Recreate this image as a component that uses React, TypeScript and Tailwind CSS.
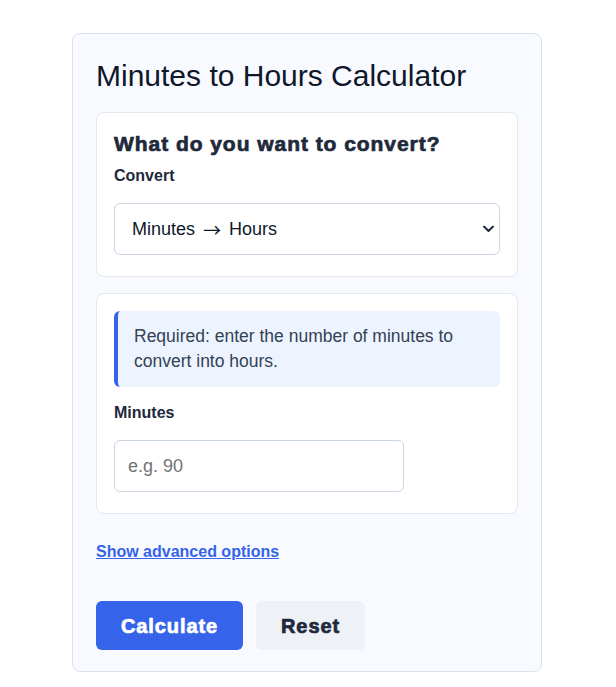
import { useState } from "react";

const options = [
  { value: "m2h", from: "Minutes", to: "Hours" },
  { value: "h2m", from: "Hours", to: "Minutes" },
];

export default function App() {
  const [mode, setMode] = useState("m2h");
  const [open, setOpen] = useState(false);
  const [minutes, setMinutes] = useState("");
  const current = options.find((o) => o.value === mode)!;

  return (
    <div className="min-h-screen bg-white pt-[33px] font-['Liberation_Sans',Arial,sans-serif] text-[#0f172a]">
      <div className="ml-[72px] w-[470px] rounded-lg border border-[#dbe2ec] bg-[#f8faff] px-[23px] pt-[24px] pb-[21px]">
        <h1 className="text-[30px] leading-[36px] font-normal text-[#0f172a]">Minutes to Hours Calculator</h1>

        {/* conversion direction */}
        <section className="mt-[18px] rounded-lg border border-[#e2e8f0] bg-white px-[17px] pt-[17px] pb-[21px]">
          <h2 className="text-[21px] leading-[28px] font-black tracking-[0.95px] text-[#1e293b] [-webkit-text-stroke:0.7px_#1e293b]">
            What do you want to convert?
          </h2>
          <label className="mt-[6px] mb-[15px] block text-[16px] leading-[24px] font-bold text-[#1e293b]">Convert</label>
          <div className="relative">
            <button
              type="button"
              onClick={() => setOpen(!open)}
              className="flex h-[52px] w-full items-center rounded-md border border-[#cbd5e1] bg-white pl-[17px] text-left text-[18px] text-[#0f172a]"
            >
              {current.from}
              <span className="mx-[8px] font-['Noto_Sans_CJK_JP',sans-serif]">→</span>
              {current.to}
            </button>
            <svg
              className="pointer-events-none absolute right-[6px] top-1/2 -translate-y-1/2"
              width="11"
              height="7"
              viewBox="0 0 11 7"
              fill="none"
            >
              <path d="M1 1l4.5 4.5L10 1" stroke="#1e293b" strokeWidth="2" strokeLinecap="round" strokeLinejoin="round" />
            </svg>
            {open && (
              <ul className="absolute left-0 right-0 top-full z-10 mt-1 rounded-md border border-[#cbd5e1] bg-white py-1 text-[18px] shadow">
                {options.map((o) => (
                  <li
                    key={o.value}
                    onClick={() => {
                      setMode(o.value);
                      setOpen(false);
                    }}
                    className="cursor-pointer px-4 py-1 hover:bg-[#eef2f7]"
                  >
                    {o.from} → {o.to}
                  </li>
                ))}
              </ul>
            )}
          </div>
        </section>

        {/* input */}
        <section className="mt-4 rounded-lg border border-[#e2e8f0] bg-white px-[17px] pt-[17px] pb-[21px]">
          <div className="rounded-md border-l-4 border-[#3563e9] bg-[#edf4ff] py-[13px] pr-4 pl-4 text-[17.5px] leading-[25px] text-[#334155]">
            Required: enter the number of minutes to convert into hours.
          </div>
          <label htmlFor="minutes" className="mt-[14px] mb-[15px] block text-[16px] leading-[24px] font-bold text-[#1e293b]">
            Minutes
          </label>
          <input
            id="minutes"
            type="text"
            inputMode="decimal"
            value={minutes}
            onChange={(e) => setMinutes(e.target.value)}
            placeholder="e.g. 90"
            className="block h-[52px] w-[290px] rounded-md border border-[#cbd5e1] bg-white px-[13px] text-[18px] text-[#0f172a] outline-none placeholder:text-[#757575]"
          />
        </section>

        <a href="#" className="mt-[26px] block w-fit text-[16px] leading-[24px] font-bold text-[#3563e9] underline">
          Show advanced options
        </a>

        <div className="mt-[37px] flex gap-[13px]">
          <button className="h-[49px] rounded-md bg-[#3563e9] px-[25px] text-[20px] font-black tracking-[0.9px] text-white [-webkit-text-stroke:0.7px_#ffffff]">
            Calculate
          </button>
          <button
            onClick={() => setMinutes("")}
            className="h-[49px] rounded-md bg-[#eef2f7] px-[25px] text-[20px] font-black tracking-[0.9px] text-[#1e293b] [-webkit-text-stroke:0.7px_#1e293b]"
          >
            Reset
          </button>
        </div>
      </div>
    </div>
  );
}
